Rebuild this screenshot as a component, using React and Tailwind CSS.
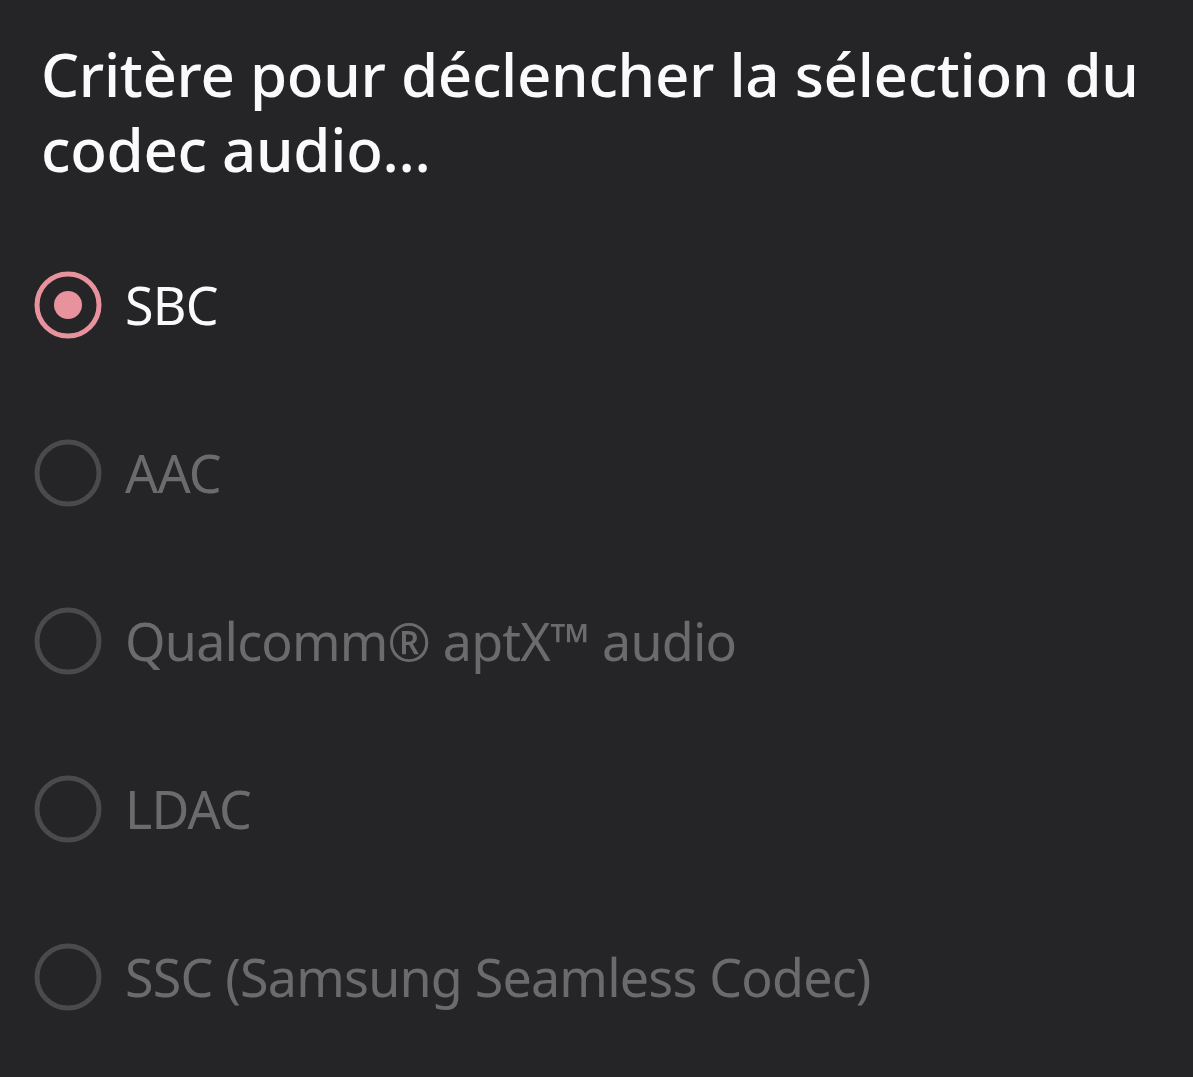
import { useState } from "react";

const codecs = [
  "SBC",
  "AAC",
  "Qualcomm® aptX™ audio",
  "LDAC",
  "SSC (Samsung Seamless Codec)",
];

function Radio({ checked }) {
  return (
    <svg width="70" height="70" viewBox="0 0 70 70" className="shrink-0">
      <circle
        cx="35"
        cy="35"
        r="31"
        fill="none"
        stroke={checked ? "#e8929e" : "#4a4a4c"}
        strokeWidth="5"
      />
      {checked && <circle cx="35" cy="35" r="14" fill="#e8929e" />}
    </svg>
  );
}

export default function App() {
  const [selected] = useState(0);

  return (
    <div
      className="min-h-screen w-[1193px] h-[1077px] overflow-hidden bg-[#252527]"
      style={{ fontFamily: '"Noto Sans", "Open Sans", sans-serif' }}
    >
      {/* Title */}
      <h1 className="pl-[41px] pt-[37px] pr-4 text-[60px] leading-[75px] font-medium text-[#fafafc] tracking-[-0.3px]">
        Critère pour déclencher la sélection du codec audio...
      </h1>

      {/* Options */}
      <div className="mt-[34px] flex flex-col">
        {codecs.map((name, i) => (
          <div key={name} className="flex items-center h-[168px] pl-[33px] gap-[22px]">
            <Radio checked={i === selected} />
            <span
              className={
                "text-[52px] tracking-[-0.8px] " +
                (i === selected ? "text-[#fafafc]" : "text-[#6b6b6d]")
              }
            >
              {name}
            </span>
          </div>
        ))}
      </div>
    </div>
  );
}
